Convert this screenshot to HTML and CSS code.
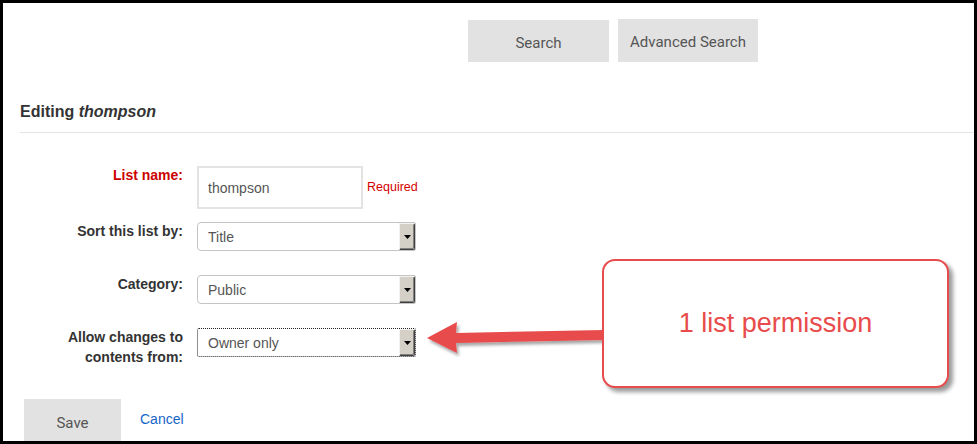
FILE: index.html
```html
<!DOCTYPE html>
<html>
<head>
<meta charset="utf-8">
<link rel="stylesheet" href="styles.css">
</head>
<body>
<div class="frame">
  <div class="topbar">
    <button class="btn btn-search">Search</button>
    <button class="btn btn-adv">Advanced Search</button>
  </div>
  <h2 class="heading">Editing <em>thompson</em></h2>
  <hr class="rule">
  <div class="form">
    <div class="row row-name">
      <label class="lbl lbl-req">List name:</label>
      <div class="input">thompson</div>
      <span class="required">Required</span>
    </div>
    <div class="row row-sort">
      <label class="lbl">Sort this list by:</label>
      <div class="select"><span class="value">Title</span><span class="drop"><svg width="7" height="4" viewBox="0 0 7 4"><polygon points="0,0 7,0 3.5,4" fill="#000"/></svg></span></div>
    </div>
    <div class="row row-cat">
      <label class="lbl">Category:</label>
      <div class="select"><span class="value">Public</span><span class="drop"><svg width="7" height="4" viewBox="0 0 7 4"><polygon points="0,0 7,0 3.5,4" fill="#000"/></svg></span></div>
    </div>
    <div class="row row-allow">
      <label class="lbl">Allow changes to<br>contents from:</label>
      <div class="select focus"><span class="value">Owner only</span><span class="drop"><svg width="7" height="4" viewBox="0 0 7 4"><polygon points="0,0 7,0 3.5,4" fill="#000"/></svg></span></div>
    </div>
  </div>
  <div class="actions">
    <button class="btn btn-save">Save</button>
    <a class="cancel" href="#">Cancel</a>
  </div>

  <svg class="arrow" width="971" height="437" viewBox="3 3 971 437">
    <defs>
      <filter id="sh" x="-10%" y="-50%" width="130%" height="250%">
        <feDropShadow dx="2" dy="3" stdDeviation="1.6" flood-color="#000" flood-opacity="0.35"/>
      </filter>
    </defs>
    <polygon filter="url(#sh)" fill="#e84b4b" points="427,338 457,322 456,333 604,330 604,340 456,343 457,353"/>
  </svg>
  <div class="callout">1 list permission</div>
</div>
</body>
</html>
```

FILE: styles.css
```css
html, body {
  margin: 0;
  padding: 0;
  background: #fff;
}

.frame {
  box-sizing: border-box;
  width: 977px;
  height: 444px;
  border: 3px solid #000;
  position: relative;
  overflow: hidden;
  font-family: Arial, "Liberation Sans", sans-serif;
  color: #333;
  background: #fff;
}

.btn {
  border: 0;
  background: #e2e2e2;
  font-family: Roboto, "Liberation Sans", sans-serif;
  font-size: 15px;
  color: #555;
  padding: 0;
  margin: 0;
  cursor: pointer;
}

.topbar {
  display: flex;
  align-items: flex-start;
  gap: 9px;
  padding: 16px 0 0 465px;
}

.btn-search {
  width: 141px;
  height: 42px;
  margin-top: 1px;
  padding-top: 3px;
}

.btn-adv {
  width: 140px;
  height: 43px;
  padding-top: 3px;
}

.heading {
  margin: 40px 0 0 17px;
  font-size: 16px;
  line-height: 20px;
  font-weight: bold;
  color: #333;
}

.heading em {
  font-style: italic;
}

.rule {
  border: 0;
  border-top: 1px solid #e4e4e4;
  margin: 10px 0 0 17px;
  height: 0;
}

.form {
  padding: 33px 0 0 17px;
  display: flex;
  flex-direction: column;
}

.row {
  display: flex;
  align-items: flex-start;
}

.row-sort {
  margin-top: 13px;
}

.row-cat,
.row-allow {
  margin-top: 24px;
}

.lbl {
  width: 163px;
  margin-right: 14px;
  margin-top: -1px;
  text-align: right;
  font-size: 14px;
  line-height: 20px;
  font-weight: bold;
  color: #333;
}

.lbl-req {
  color: #cc0000;
}

.input {
  box-sizing: border-box;
  width: 166px;
  height: 43px;
  border: 2px solid #e3e3e3;
  padding: 0 0 0 9px;
  display: flex;
  align-items: center;
  font-size: 14px;
  color: #555;
}

.required {
  margin-left: 4px;
  margin-top: 13px;
  font-size: 12.5px;
  line-height: 16px;
  color: #d40000;
}

.select {
  box-sizing: border-box;
  width: 219px;
  height: 29px;
  border: 1px solid #c4c4c4;
  border-radius: 4px 2px 2px 4px;
  display: flex;
  align-items: stretch;
  background: #fff;
}

.select.focus {
  border: 1px dotted #222;
  border-radius: 2px;
}

.value {
  flex: 1;
  display: flex;
  align-items: center;
  padding-left: 10px;
  font-size: 14px;
  color: #555;
}

.drop {
  box-sizing: border-box;
  width: 16px;
  background: #d4d0c8;
  border-top: 1px solid #f4f2ee;
  border-left: 1px solid #f4f2ee;
  border-right: 1px solid #404040;
  border-bottom: 1px solid #404040;
  box-shadow: inset -1px -1px 0 #808080;
  border-radius: 0 2px 2px 0;
  display: flex;
  align-items: center;
  justify-content: center;
}

.drop svg {
  display: block;
  margin-top: 1px;
}

.actions {
  display: flex;
  align-items: flex-start;
  gap: 19px;
  padding: 32px 0 0 21px;
}

.btn-save {
  width: 97px;
  height: 44px;
  padding-top: 3px;
}

.cancel {
  margin-top: 10px;
  font-size: 14px;
  line-height: 20px;
  color: #1565c8;
  text-decoration: none;
}

.arrow {
  position: absolute;
  left: 0;
  top: 0;
  pointer-events: none;
}

.callout {
  position: absolute;
  left: 599px;
  top: 256px;
  box-sizing: border-box;
  width: 347px;
  height: 129px;
  border: 2px solid #e84b4b;
  border-radius: 13px;
  background: #fff;
  box-shadow: 4px 4px 4px rgba(0, 0, 0, 0.4);
  display: flex;
  align-items: center;
  justify-content: center;
  font-family: Arial, "Liberation Sans", sans-serif;
  font-size: 27px;
  color: #e84b4b;
}
```
